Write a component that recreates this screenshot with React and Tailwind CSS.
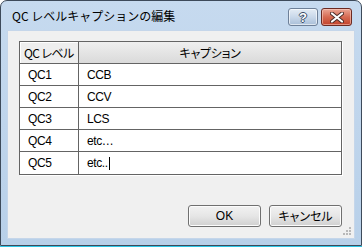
import React from 'react';

const rows = [
  ['QC1', 'CCB'],
  ['QC2', 'CCV'],
  ['QC3', 'LCS'],
  ['QC4', 'etc…'],
  ['QC5', 'etc..'],
];

const ui = { fontFamily: '"Liberation Sans", "Noto Sans CJK JP", sans-serif' };
const jp = { fontFamily: '"Noto Sans CJK JP", "Liberation Sans", sans-serif' };

function HelpButton() {
  return (
    <div className="w-[30px] h-[18px] rounded-[3px] border border-[#6e8098] bg-gradient-to-b from-[#e4ecf5] via-[#c9d8ea] to-[#a9bfd8] shadow-[inset_0_0_0_1px_rgba(255,255,255,0.6)] flex items-center justify-center">
      <span className="text-[13px] font-bold leading-none text-white [text-shadow:1px_0_0_#3a4c66,-1px_0_0_#3a4c66,0_1px_0_#3a4c66,0_-1px_0_#3a4c66]" style={ui}>?</span>
    </div>
  );
}

function CloseButton() {
  return (
    <div className="w-[31px] h-[18px] rounded-[3px] border border-[#6b2a22] bg-gradient-to-b from-[#eaa595] via-[#d66a52] to-[#c2412a] shadow-[inset_0_0_0_1px_rgba(255,220,210,0.5)] flex items-center justify-center">
      <svg width="14" height="11" viewBox="0 0 14 11">
        <path d="M2 1.5 L12 9.5 M12 1.5 L2 9.5" stroke="#4a2a26" strokeWidth="4" strokeLinecap="round" />
        <path d="M2 1.5 L12 9.5 M12 1.5 L2 9.5" stroke="#ffffff" strokeWidth="2.2" strokeLinecap="round" />
      </svg>
    </div>
  );
}

function Button({ children, font }) {
  return (
    <button className="w-[73px] h-[22px] rounded-[3px] border border-[#707070] bg-gradient-to-b from-[#f2f2f2] via-[#e6e6e6] to-[#d0d0d0] shadow-[inset_0_0_0_1px_#fcfcfc] text-[12px] text-black flex items-center justify-center" style={font}>
      {children}
    </button>
  );
}

export default function App() {
  return (
    <div className="w-[362px] h-[247px] bg-white overflow-hidden">
      <div className="w-[362px] h-[246px] rounded-t-[7px] border border-[#3d4a5a] bg-gradient-to-b from-[#c6daef] to-[#b8d0e9] flex flex-col">
        <div className="h-[29px] flex items-center pl-[11px] pr-[9px]">
          <span className="text-[12px] text-black flex-1" style={jp}>QC レベルキャプションの編集</span>
          <div className="flex gap-[3px] mt-[3px]">
            <HelpButton />
            <CloseButton />
          </div>
        </div>
        <div className="relative mx-[6px] mb-[6px] flex-1 border border-[#c5d6ea] bg-[#f0f0f0] pl-[11px] pr-[12px] pt-[10px]">
          <div className="border border-[#646464] bg-white shadow-[1px_1px_0_#ffffff]">
            <div className="flex h-[22px] border-b border-[#646464]">
              <div className="w-[59px] border-r border-[#646464] bg-[#eeeeee] shadow-[inset_1px_1px_0_#ffffff] flex items-center pl-[4px] text-[12px] [font-feature-settings:'palt'] tracking-[-0.6px] whitespace-nowrap" style={jp}>
                QC レベル
              </div>
              <div className="flex-1 bg-gradient-to-b from-[#efefef] to-[#dadada] flex items-center justify-center text-[12px] [font-feature-settings:'palt'] tracking-[-0.3px]" style={jp}>
                キャプション
              </div>
            </div>
            {rows.map(([qc, cap], i) => (
              <div key={qc} className={`flex h-[22px] ${i < rows.length - 1 ? 'border-b border-[#646464]' : ''}`}>
                <div className="w-[59px] border-r border-[#646464] flex items-center pl-[8px] text-[12px] text-black tracking-[-0.4px]" style={ui}>
                  {qc}
                </div>
                <div className="flex-1 flex items-center pl-[8px] text-[12px] text-black tracking-[-0.4px]" style={ui}>
                  {cap}
                  {i === rows.length - 1 && <span className="ml-[1px] w-px h-[13px] bg-black" />}
                </div>
              </div>
            ))}
          </div>
          <div className="flex justify-end gap-[8px] mt-[30px]">
            <Button font={ui}>OK</Button>
            <Button font={{ ...jp, fontFeatureSettings: '"palt"' }}>キャンセル</Button>
          </div>
          <svg className="absolute right-[2px] bottom-[2px]" width="10" height="10" viewBox="0 0 10 10">
            <g fill="#b8b8b8">
              <rect x="7" y="1" width="2" height="2" />
              <rect x="4" y="4" width="2" height="2" />
              <rect x="7" y="4" width="2" height="2" />
              <rect x="1" y="7" width="2" height="2" />
              <rect x="4" y="7" width="2" height="2" />
              <rect x="7" y="7" width="2" height="2" />
            </g>
          </svg>
        </div>
      </div>
      <div className="h-px bg-[#2ec6e6]" />
    </div>
  );
}
